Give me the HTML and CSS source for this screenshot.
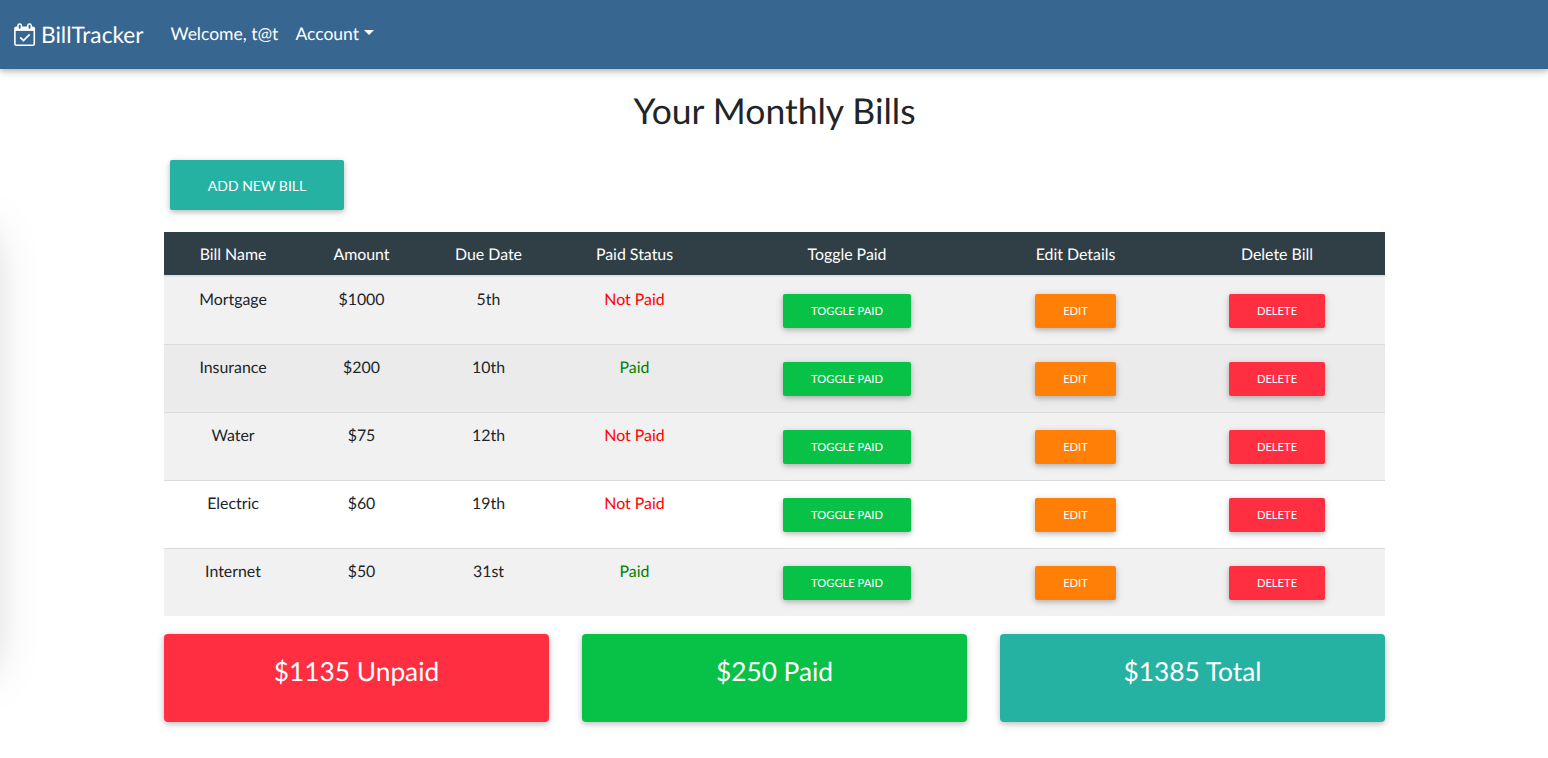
FILE: index.html
```html
<!DOCTYPE html>
<html lang="en">
<head>
<meta charset="utf-8">
<title>BillTracker</title>
<link rel="stylesheet" href="styles.css">
</head>
<body>
<nav class="navbar">
  <a class="brand">
    <svg class="brand-icon" viewBox="0 0 22 24" fill="none" stroke="#fff">
      <rect x=".9" y="4.2" width="19.4" height="18" rx="1.5" stroke-width="1.6"/>
      <path d="M1 4.2h19.2v3.7H1z" fill="#fff" stroke="none"/>
      <rect x="4" y="1" width="3.4" height="5.4" rx="1.6" fill="#376690" stroke-width="1.5"/>
      <rect x="13.8" y="1" width="3.4" height="5.4" rx="1.6" fill="#376690" stroke-width="1.5"/>
      <path d="M6.2 14.3l3.3 3.3 6.2-6.2" stroke-width="1.8"/>
    </svg>
    <span>BillTracker</span>
  </a>
  <span class="nav-item">Welcome, t@t</span>
  <a class="nav-item dropdown">Account</a>
</nav>
<div class="side-panel"></div>
<main class="content">
  <h1 class="title">Your Monthly Bills</h1>
  <button class="btn btn-add">ADD NEW BILL</button>
  <table class="bills">
    <colgroup><col class="c1"><col class="c2"><col class="c3"><col class="c4"><col class="c5"><col class="c6"><col class="c7"></colgroup>
    <thead>
      <tr><th>Bill Name</th><th>Amount</th><th>Due Date</th><th>Paid Status</th><th>Toggle Paid</th><th>Edit Details</th><th>Delete Bill</th></tr>
    </thead>
    <tbody>
      <tr class="odd first"><td>Mortgage</td><td>$1000</td><td>5th</td><td class="unpaid">Not Paid</td><td><button class="btn sm green toggle">TOGGLE PAID</button></td><td><button class="btn sm orange edit">EDIT</button></td><td><button class="btn sm red delete">DELETE</button></td></tr>
      <tr class="hovered"><td>Insurance</td><td>$200</td><td>10th</td><td class="paid">Paid</td><td><button class="btn sm green toggle">TOGGLE PAID</button></td><td><button class="btn sm orange edit">EDIT</button></td><td><button class="btn sm red delete">DELETE</button></td></tr>
      <tr class="odd"><td>Water</td><td>$75</td><td>12th</td><td class="unpaid">Not Paid</td><td><button class="btn sm green toggle">TOGGLE PAID</button></td><td><button class="btn sm orange edit">EDIT</button></td><td><button class="btn sm red delete">DELETE</button></td></tr>
      <tr><td>Electric</td><td>$60</td><td>19th</td><td class="unpaid">Not Paid</td><td><button class="btn sm green toggle">TOGGLE PAID</button></td><td><button class="btn sm orange edit">EDIT</button></td><td><button class="btn sm red delete">DELETE</button></td></tr>
      <tr class="odd"><td>Internet</td><td>$50</td><td>31st</td><td class="paid">Paid</td><td><button class="btn sm green toggle">TOGGLE PAID</button></td><td><button class="btn sm orange edit">EDIT</button></td><td><button class="btn sm red delete">DELETE</button></td></tr>
    </tbody>
  </table>
  <section class="totals">
    <div class="card red">$1135 Unpaid</div>
    <div class="card green">$250 Paid</div>
    <div class="card teal">$1385 Total</div>
  </section>
</main>
</body>
</html>
```
FILE: styles.css
```css
* { box-sizing: border-box; }
body {
  margin: 0;
  height: 758px;
  overflow: hidden;
  position: relative;
  background: #fff;
  color: #212529;
  font: 15.9px/24px Lato, sans-serif;
  text-rendering: geometricPrecision;
}
.navbar {
  display: flex;
  align-items: center;
  height: 69px;
  padding: 0 14px;
  background: #376690;
  color: #fff;
  box-shadow: 0 2px 5px rgba(0,0,0,.2), 0 2px 10px rgba(0,0,0,.15);
}
.brand { display: flex; align-items: center; gap: 5px; width: 156.5px; font-size: 22.7px; }
.brand-icon { width: 22px; height: 24px; flex: none; }
.nav-item { font-size: 17.5px; margin-right: 17px; padding-bottom: 1px; }
.dropdown::after {
  content: "";
  display: inline-block;
  margin-left: 5px;
  vertical-align: 5px;
  border-top: 5px solid #fff;
  border-left: 5px solid transparent;
  border-right: 5px solid transparent;
}
.side-panel {
  position: absolute;
  left: -254px;
  top: 233px;
  width: 240px;
  height: 430px;
  box-shadow: 0 4px 46px rgba(0,0,0,.25);
}
.content { width: 1221px; margin: 0 auto 0 164px; padding-top: 19px; }
.title { margin: 0; height: 46px; font-size: 35.5px; font-weight: 400; line-height: 46px; text-align: center; }
.btn {
  display: block;
  border: 0;
  border-radius: 2px;
  padding: 0;
  color: #fff;
  font-family: Lato, sans-serif;
  box-shadow: 0 2px 5px rgba(0,0,0,.2), 0 2px 10px rgba(0,0,0,.1);
}
.btn-add { width: 174px; height: 50px; margin: 26px 0 22px 6px; background: #26b2a3; font-size: 14px; line-height: 20px; padding-top: 2px; }
.sm { height: 34px; margin: 0 auto; font-size: 11.2px; line-height: 34px; }
.toggle { width: 128px; }
.edit { width: 81px; }
.delete { width: 96px; }
.red { background: #ff2e40; }
.green { background: #08c248; }
.orange { background: #ff7f07; }
.teal { background: #26b2a3; }
.bills { width: 1221px; table-layout: fixed; border-collapse: separate; border-spacing: 0; text-align: center; }
.c1 { width: 138px; }
.c2 { width: 119px; }
.c3 { width: 135px; }
.c4 { width: 157px; }
.c5 { width: 268px; }
.c6 { width: 189px; }
.c7 { width: 215px; }
.bills th { height: 45px; padding: 2px 0 0; background: #303e45; color: #fff; font-weight: 400; border-bottom: 2px solid #dee2e6; }
.bills td { height: 68px; padding: 11px 0 0; vertical-align: top; border-top: 1px solid #dadbdc; }
.bills th:last-child, .bills td:last-child { padding-right: 1px; }
.bills td .btn { margin-top: 6px; }
.first td { height: 67px; border-top: 0; }
.odd { background: #f1f1f1; }
.hovered { background: #ebebeb; }
.bills .unpaid { color: #f00; }
.bills .paid { color: #008000; }
.totals { display: grid; grid-template-columns: repeat(3, 385px); gap: 33px; margin-top: 18px; }
.card {
  height: 88px;
  padding-top: 20px;
  border-radius: 4px;
  color: #fff;
  font-size: 26.3px;
  line-height: 35px;
  text-align: center;
  box-shadow: 0 2px 5px rgba(0,0,0,.16), 0 2px 10px rgba(0,0,0,.12);
}
```
